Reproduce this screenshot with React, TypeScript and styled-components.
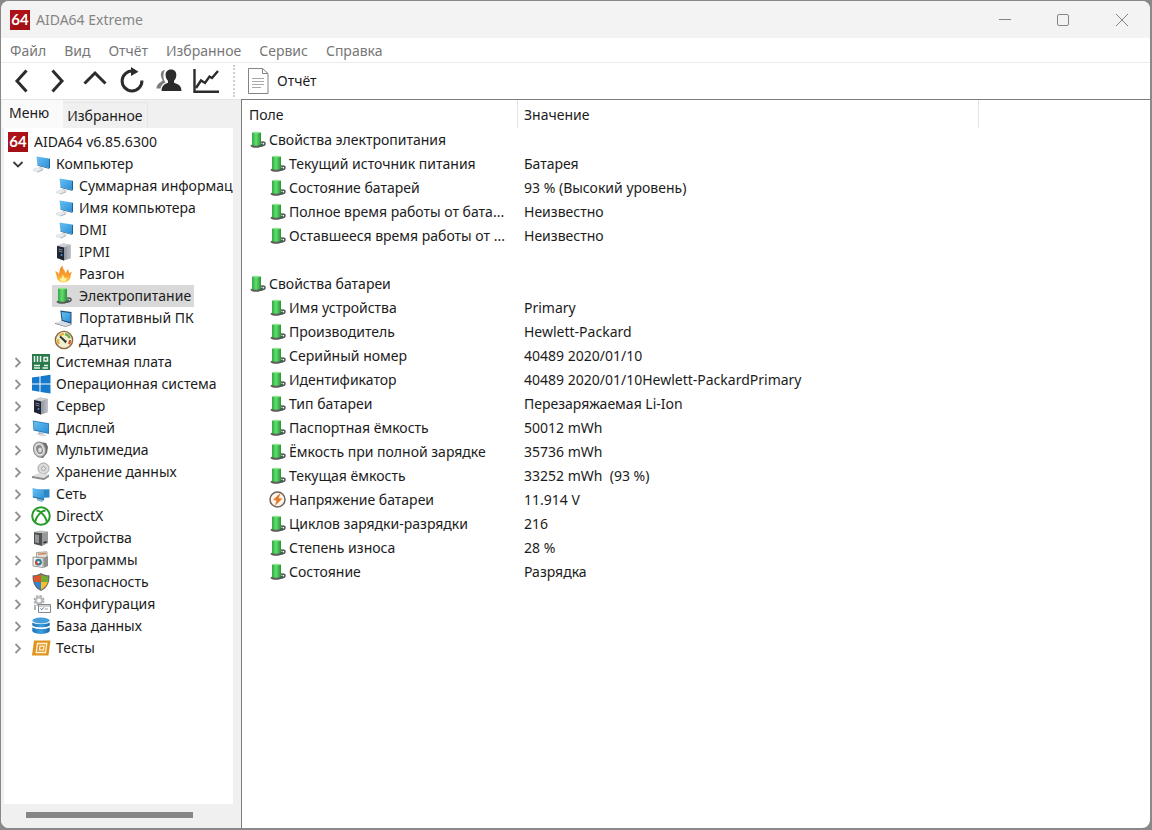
import React, { ReactNode, useState } from "react";
import styled, { createGlobalStyle } from "styled-components";

const GlobalStyle = createGlobalStyle`
  * { box-sizing: border-box; }
  body {
    margin: 0;
    background: #8b888a;
    color: #1c1c1c;
    font-family: "Noto Sans", "Open Sans", sans-serif;
    font-size: 14px;
    line-height: 22px;
  }
  button {
    margin: 0;
    padding: 0;
    border: 0;
    background: none;
    color: inherit;
    font: inherit;
    text-align: left;
  }
  svg { display: block; flex: none; overflow: visible; }
`;

const Desktop = styled.div`
  display: flex;
  min-height: 100vh;
  padding: 1px 2px 2px 1px;
`;

const AppWindow = styled.main`
  flex: 1;
  min-width: 0;
  display: flex;
  flex-direction: column;
  overflow: hidden;
  border-radius: 8px;
  background: #fff;
`;

const TitleBar = styled.header`
  display: flex;
  align-items: center;
  height: 37px;
  padding-left: 9px;
  background: #f3f3f3;
  color: #858585;
`;

const Title = styled.h1`
  flex: 1;
  margin: 0 0 0 6px;
  font-size: 14px;
  font-weight: 400;
`;

const CaptionButton = styled.button`
  display: flex;
  align-items: center;
  justify-content: center;
  width: 58px;
  height: 36px;
`;

const MenuBar = styled.nav`
  display: flex;
  align-items: flex-end;
  height: 25px;
  border-bottom: 1px solid #ebebeb;
  color: #777;
`;

const MenuItem = styled.button`
  padding: 0 9px;
`;

const Toolbar = styled.div`
  display: flex;
  align-items: center;
  height: 36px;
  padding-left: 1px;
`;

const ToolButton = styled.button`
  display: flex;
  align-items: center;
  justify-content: center;
  width: 37px;
  height: 34px;
`;

const ToolSeparator = styled.span`
  height: 32px;
  margin: 0 13px 0 9px;
  border-left: 2px dotted #cfcfcf;
`;

const ReportButton = styled.button`
  display: flex;
  align-items: center;
  gap: 8px;
`;

const Body = styled.div`
  flex: 1;
  display: flex;
  min-height: 0;
`;

const Sidebar = styled.aside`
  display: flex;
  flex-direction: column;
  flex: none;
  width: 240px;
  padding: 0 8px 2px 3px;
  background: #f0f0f0;
  border-top: 1px solid #e4e4e4;
`;

const Tabs = styled.div`
  display: flex;
  align-items: flex-end;
  height: 28px;
  margin-left: -2px;
`;

const Tab = styled.button<{ $active: boolean }>`
  height: ${(p) => (p.$active ? 28 : 26)}px;
  padding: ${(p) => (p.$active ? "0 14px 3px 7px" : "0 4px")};
  background: ${(p) => (p.$active ? "#fafafa" : "#f0f0f0")};
  border: ${(p) => (p.$active ? "0" : "1px solid #e6e6e6")};
  border-width: ${(p) => (p.$active ? "0" : "1px 1px 0 0")};
`;

const TreePane = styled.div`
  flex: 1;
  overflow: hidden;
  padding-top: 3px;
  background: #fff;
`;

const TreeList = styled.ul`
  margin: 0;
  padding: 0;
  list-style: none;
`;

const TreeRow = styled.li<{ $level: number }>`
  display: flex;
  align-items: center;
  height: 22px;
  padding-left: ${(p) => [1, 8, 48][p.$level]}px;
  white-space: nowrap;
`;

const Expander = styled.button`
  display: flex;
  align-items: center;
  justify-content: center;
  width: 12px;
  height: 22px;
  margin-right: 5px;
`;

const TreeLabel = styled.button<{ $selected?: boolean }>`
  display: flex;
  align-items: center;
  gap: 6px;
  height: 22px;
  padding: 0 3px;
  background: ${(p) => (p.$selected ? "#d9d9d9" : "transparent")};
`;

const ScrollTrack = styled.div`
  flex: none;
  height: 22px;
  padding: 8px 40px 8px 22px;
`;

const ScrollThumb = styled.div`
  height: 6px;
  background: #868686;
`;

const Details = styled.section`
  flex: 1;
  min-width: 0;
  border-top: 1px solid #7c7c7c;
  border-left: 1px solid #7c7c7c;
`;

const DetailsTable = styled.table`
  width: 100%;
  table-layout: fixed;
  border-collapse: separate;
  border-spacing: 0;
`;

const Column = styled.col<{ $width?: number }>`
  width: ${(p) => (p.$width ? `${p.$width}px` : "auto")};
`;

const HeadCell = styled.th`
  height: 28px;
  padding: 2px 6px 0 7px;
  border-right: 1px solid #e3e3e3;
  font-weight: 400;
  text-align: left;
  &:nth-child(2) { padding-left: 6px; }
  &:last-child { border-right: 0; }
`;

const Cell = styled.td`
  height: 24px;
  padding: 0 6px;
  white-space: pre;
  &:first-child { padding: 0 0 0 8px; }
`;

const FieldName = styled.div<{ $child: boolean }>`
  display: flex;
  align-items: center;
  gap: 3px;
  padding-left: ${(p) => (p.$child ? 20 : 0)}px;
`;

/* ---------- icons ---------- */

const SharedGradients = () => (
  <svg width="0" height="0" aria-hidden="true">
    <defs>
      <linearGradient id="green"><stop offset="0" stopColor="#2fa848" /><stop offset=".45" stopColor="#63dd6b" /><stop offset="1" stopColor="#27923b" /></linearGradient>
      <linearGradient id="screen" x2="1" y2="1"><stop offset="0" stopColor="#69c0f2" /><stop offset="1" stopColor="#2a8fd6" /></linearGradient>
      <linearGradient id="steel"><stop offset="0" stopColor="#8d9098" /><stop offset="1" stopColor="#c2c4ca" /></linearGradient>
      <linearGradient id="fire" x2="0" y2="1"><stop offset="0" stopColor="#f0862b" /><stop offset=".6" stopColor="#f9a12e" /><stop offset="1" stopColor="#fdd04c" /></linearGradient>
      <linearGradient id="blue" x2="1"><stop offset="0" stopColor="#1a73b8" /><stop offset=".5" stopColor="#3f9fe0" /><stop offset="1" stopColor="#1766a8" /></linearGradient>
    </defs>
  </svg>
);

const Icon = ({ size = 18, box = 18, children }: { size?: number; box?: number; children: ReactNode }) => (
  <svg width={size} height={size} viewBox={`0 0 ${box} ${box}`} fill="none" aria-hidden="true">{children}</svg>
);

const LogoText = styled.text`
  fill: #fff;
  font-family: Lato, sans-serif;
  font-size: 15px;
  font-weight: 700;
  text-anchor: middle;
`;

const Logo = () => (
  <Icon size={20} box={20}>
    <path fill="#ae1218" d="M0 0h20v20H0z" />
    <path fill="#8c0b12" d="M20 0v20H0z" opacity=".35" />
    <LogoText x="10" y="15">64</LogoText>
  </Icon>
);

const ComputerIcon = () => (
  <Icon>
    <path fill="#c9d3da" d="M2 13.500l7-1.500 3 2-6 3-5-1z" />
    <path fill="#e6eaed" d="M0 14.500l6-2 4 1.500-5 3z" />
    <path fill="#9aa8b3" d="M5 17l6-2.600v.8L5.500 17.500z" />
    <path fill="url(#screen)" d="M4.500 1.500L17 3.600v9.400L5.500 10z" />
    <path fill="#1f6396" d="M17 3.600l1 .3v9.200l-1.200.7L5.500 10.800V10L17 13z" />
  </Icon>
);

const LaptopIcon = () => (
  <Icon>
    <path fill="#234e78" d="M5.300 1.500L16.500 3v12L6.600 12z" />
    <path fill="url(#screen)" d="M6.400 2.900l9.100 1.200v9.200L7.600 11z" />
    <path fill="#d5dbe0" d="M0 14l6.500-2 10 3-6 2.400z" />
    <path fill="#5d6c78" d="M0 14l10.500 3.400 6-2.400v.8l-6 2.200L0 14.800z" />
  </Icon>
);

const ServerIcon = () => (
  <Icon>
    <path fill="#8e9199" d="M2 3l6.500-2.500L16 2v13l-7.500 2.500L2 15z" />
    <path fill="#cdcfd5" d="M2 3l6.500-2.500L16 2 9 4.500z" />
    <path fill="url(#steel)" d="M9 4.500L16 2v13l-7.500 2.500z" />
    <path fill="#20242e" d="M2 3l7 1.500v13L2 15z" />
    <path stroke="#738ba8" d="M3.500 6l4 1M3.500 8l4 1" />
    <circle cx="6.500" cy="12" r="1" fill="#3f95e5" />
  </Icon>
);

const FlameIcon = () => (
  <Icon>
    <path fill="url(#fire)" d="M8 17.500C3.800 17.300 2 14.500 1.800 12 1.600 9.300.5 7.800.3 6.300c2 .5 3.200 1.500 3.700 3C4.600 7 4.300 3 7.500.500 7.600 4.500 10 5 10.700 8.300c1-1.200 1-3 2.500-4.500 0 2 .8 3 1 4.300.8-.6 2-1 3-.8-1.800 1.700-1.200 4-2 6-.9 2.300-3.300 4.400-7.200 4.200z" />
    <path fill="#fff09a" d="M8.500 16.800c-2.700 0-4-2-3.500-4l1.300 1.200c.2-2 1-3 1.800-4.500.3 2 1.400 2.300 1.700 4.300l1.700-1.500c.6 2.400-.6 4.500-3 4.500z" />
  </Icon>
);

const PowerIcon = () => (
  <Icon size={16} box={16}>
    <ellipse cx="6" cy="13.800" rx="5.500" ry="2" fill="#5b605b" />
    <path stroke="#4e5a55" strokeWidth="1.600" d="M8 14.200c3.400.4 6.600-.7 7-2.200s-1.500-2.400-4.500-1.800M8 13l5-1" />
    <path fill="url(#green)" d="M2 .5h9v11.800c-1.500 1.700-6.500 2-9 .7z" />
    <ellipse cx="6.500" cy=".6" rx="4.500" ry=".8" fill="#8ee58f" />
  </Icon>
);

const GaugeIcon = () => (
  <Icon>
    <circle cx="9" cy="9" r="8.600" fill="#f1efd2" stroke="#8c6439" strokeWidth="1.400" />
    <path stroke="#e8af38" strokeWidth="2.200" d="M4 13a6 6 0 0 1-.8-5M4.500 5A6 6 0 0 1 9 3" />
    <path stroke="#69ad49" strokeWidth="2.200" d="M10 3.100a6 6 0 0 1 4.700 4" />
    <path stroke="#d65a2c" strokeWidth="2.200" d="M15 9a6 6 0 0 1-1.200 4" />
    <path stroke="#2e3a2c" strokeWidth="2" d="M5 5.500l5 4.500" />
    <path fill="#2c302c" d="M8 9l4 .8-1.500 2.700z" />
  </Icon>
);

const BoardIcon = () => (
  <Icon>
    <path fill="#28784b" d="M0 1h18v16H0z" />
    <path stroke="#e6f2ea" strokeWidth="1.500" d="M2.500 3v6M5.500 3v6M8.500 3v6M2 12.500h6M2 15h6M12 12.500h4M10.500 15h5.500" />
    <path stroke="#e6f2ea" strokeWidth="1.500" d="M12 4.500h3.500V8H12z" />
  </Icon>
);

const WindowsIcon = () => (
  <Icon>
    <path fill="#1679c9" d="M0 2.500l7.500-1.100v7.200H0zM8.500 1.200L18.500-.3v8.900h-10zM0 9.500h7.500v7.200L0 15.600zM8.500 9.500h10v8.900l-10-1.500z" />
  </Icon>
);

const DisplayIcon = () => (
  <Icon>
    <path fill="#9cabb5" d="M7 13l5 1.500v2L6 15z" />
    <path fill="#d4dce1" d="M4 15l7-.5 4 2-5 1z" />
    <path fill="#2d80b9" d="M.800 1.500L17 4.300V15L1.500 11.500z" />
    <path fill="url(#screen)" d="M1.600 2.500L16 5.100v8.600L2.300 10.600z" />
  </Icon>
);

const SpeakerIcon = () => (
  <Icon>
    <path fill="#6a6a6a" d="M8 1l6 1 2 4-1 6-4 5-5-1z" />
    <ellipse cx="7.500" cy="8.500" rx="6" ry="7.600" fill="#c9c9c9" stroke="#8d8d8d" transform="rotate(-15 7.500 8.500)" />
    <ellipse cx="7.500" cy="8.500" rx="3.800" ry="5.200" fill="#8b8b8b" stroke="#e9e9e9" transform="rotate(-15 7.500 8.500)" />
    <ellipse cx="8" cy="9" rx="1.800" ry="2.600" fill="#e0e0e0" />
  </Icon>
);

const DriveIcon = () => (
  <Icon>
    <circle cx="11.500" cy="5.500" r="5.500" fill="#dadada" stroke="#a5a5a5" />
    <circle cx="11.500" cy="5.500" r="1.800" fill="#f7f7f7" stroke="#999" />
    <path fill="#dedede" d="M0 13l7-3 10 1.500-5 3.500z" />
    <path fill="#8b8b8b" d="M0 13l12 2 5-3.500v2.500l-5 3L0 15z" />
  </Icon>
);

const NetworkIcon = () => (
  <Icon>
    <path fill="#8cb7ce" d="M5 13l8 1.500-3 2.500-5-1.500z" />
    <path fill="#2c87c4" d="M5 4.500l12.500-.3v8.300L7 13z" />
    <path fill="url(#screen)" d="M.5 3L12 5.500v9L.8 12z" />
    <path fill="#1f689e" d="M.800 11.500L12 14v1L.800 12.500z" />
  </Icon>
);

const XIcon = () => (
  <Icon>
    <circle cx="9" cy="9" r="8.800" stroke="#279b2b" strokeWidth="2" />
    <path stroke="#279b2b" strokeWidth="2" d="M3 15C4 11.500 7 7 9 5.500M15 15c-1-3.500-4-8-6-9.500M4.500 3.500C7 3.500 8 4.600 9 5.500c1-.9 2-2 4.500-2" />
  </Icon>
);

const DeviceIcon = () => (
  <Icon>
    <path fill="#4f5052" d="M2 3l8 1v13l-8-2z" />
    <path fill="#b9babb" d="M2 3l6-1.500 8 1L10 4z" />
    <path fill="#97999b" d="M10 4l6-1.500V14l-6 3z" />
    <path stroke="#d9dadb" d="M4 5.500v8M6 6v8" />
    <path fill="#222" d="M11.500 13l3-1v1.500l-3 1z" />
  </Icon>
);

const ProgramsIcon = () => (
  <Icon>
    <path fill="#e4e1dc" stroke="#aaa49b" d="M4.500 1.500L15 .8v6L4.500 6z" />
    <path fill="#d08455" d="M6 2.500l8-.7v1.500L6 4z" />
    <path fill="#f3f3f3" stroke="#9a9a9a" d="M1 6l10 1v9.500L1 15z" />
    <path fill="#8f8f8f" d="M11.500 7L16 5v10l-4.500 2z" />
    <circle cx="6.500" cy="11.200" r="3.400" fill="#3d7f98" />
    <path fill="#d04a35" d="M6.500 11.200L3.300 10a3.400 3.400 0 0 0 2 4.500z" />
    <circle cx="6.500" cy="11.200" r="1.100" fill="#fff" />
  </Icon>
);

const ShieldIcon = () => (
  <Icon>
    <path fill="#67686a" d="M9 0c2.500 1.600 5.300 2.300 8.400 2.300.4 7.400-2.200 13-8.400 15.700C2.800 15.300.2 9.700.6 2.300 3.700 2.300 6.500 1.600 9 0z" />
    <path fill="#e0542a" d="M9 1.400V9H2.200c-.5-1.800-.6-3.500-.5-5.600 2.800-.2 5-.7 7.300-2z" />
    <path fill="#70ad34" d="M9 1.400c2.300 1.300 4.500 1.800 7.300 2 .1 2.100 0 3.800-.5 5.600H9z" />
    <path fill="#2e87d3" d="M9 9v7.800C5.600 15.100 3.300 12.600 2.200 9z" />
    <path fill="#fbbe2b" d="M9 9h6.800c-1.100 3.600-3.400 6.100-6.800 7.800z" />
  </Icon>
);

const ConfigIcon = () => (
  <Icon>
    <circle cx="7" cy="5.500" r="4.200" stroke="#a9adb0" strokeWidth="2.600" strokeDasharray="2.100 1.200" />
    <circle cx="7" cy="5.500" r="3" stroke="#b7babd" strokeWidth="2" />
    <path fill="#b3b6b9" d="M2 10h2v5H2z" />
    <path fill="#fff" stroke="#85898d" d="M6.500 9.500h12v8h-12z" />
    <path stroke="#3c7bc0" d="M8.500 13.500l1.200 1.200 2.300-2.400" />
    <path stroke="#9a9ea2" d="M13 14h3M7 11h11" />
  </Icon>
);

const DatabaseIcon = () => (
  <Icon>
    <ellipse cx="9" cy="3.500" rx="8.700" ry="2.900" fill="#459edc" />
    <path fill="url(#blue)" d="M.3 5.400c3 2.200 14.400 2.200 17.400 0v3.200c-2.600 2.600-14.800 2.600-17.400 0zM.3 10.300c3 2.200 14.400 2.200 17.400 0v4c-2.600 3.600-14.800 3.600-17.400 0z" />
    <path stroke="#fff" d="M.3 9.600c3 2.300 14.400 2.300 17.400 0" />
  </Icon>
);

const TestsIcon = () => (
  <Icon>
    <path fill="#e0941f" d="M2 1.500h16.500l-2 15H0z" />
    <path stroke="#fff2d6" strokeWidth="1.300" d="M5.500 4.500h9.300l-1.300 9H4.200z" />
    <path stroke="#fff2d6" strokeWidth="1.300" d="M8 7.200h4l-.5 3.600h-4z" />
  </Icon>
);

const VoltageIcon = () => (
  <Icon size={16} box={16}>
    <circle cx="7.500" cy="7.500" r="7.500" fill="#fdf7f0" stroke="#6d625c" strokeWidth="1.500" />
    <path fill="#e27a27" d="M10.500.8L3 8.100l3.600.3-2 5.900 7.900-7.700-3.700-.3z" />
  </Icon>
);

const toolIcons: { label: string; icon: ReactNode }[] = [
  { label: "Назад", icon: <path d="M19.500 3.500L10 14l9.500 10.500" /> },
  { label: "Вперёд", icon: <path d="M8.500 3.500L18 14 8.500 24.500" /> },
  { label: "Вверх", icon: <path d="M3.500 16.500L14 6l10.500 10.500" /> },
  {
    label: "Обновить",
    icon: (
      <>
        <path d="M15.500 4.200A9.900 9.900 0 1 0 23.900 13.500" />
        <path fill="#2c2c2c" stroke="none" d="M13 0l7.500 4.800L13 9z" />
      </>
    ),
  },
  {
    label: "Пользователи",
    icon: (
      <g stroke="none">
        <path fill="#7d7d7d" d="M10 3C6.500 3.500 5.500 6 6 9c.3 2 1 3 1.600 4.200C7 15 1.500 16 1.500 21.500h4c.5-3.500 3-5 5-6-1-1.500-2.500-4-2-7.500C8.700 6 9 4 10 3z" />
        <path fill="#2c2c2c" d="M16 2.500c3.600 0 5.600 2.400 5.300 6-.2 2.500-1 4-2.300 5.200v2c3 1.300 7.500 2 7.500 8.300h-20c0-6 3.500-7 6.500-8.300v-2c-1.300-1.200-2.200-2.700-2.400-5.200-.3-3.600 1.800-6 5.400-6z" />
      </g>
    ),
  },
  {
    label: "График",
    icon: (
      <g strokeWidth="2.400">
        <path d="M2.500 2v22.800H27" />
        <path d="M4 21l5-7.500 4 2.500 4.500-6.500 2.500 1.500L26 4" />
      </g>
    ),
  },
];

const ReportIcon = () => (
  <svg width="21" height="26" viewBox="0 0 21 26" fill="none" aria-hidden="true">
    <path fill="#fff" stroke="#838383" d="M.5.5h14l5.500 5v20H.5z" />
    <path stroke="#838383" d="M14.500.5v5H20" />
    <path stroke="#a9a9a9" d="M4 10.500h12M4 13.500h12M4 16.500h12M4 19.500h9" />
  </svg>
);

/* ---------- data ---------- */

const menuItems = ["Файл", "Вид", "Отчёт", "Избранное", "Сервис", "Справка"];

const computerPages: [string, ReactNode][] = [
  ["Суммарная информация", <ComputerIcon />],
  ["Имя компьютера", <ComputerIcon />],
  ["DMI", <ComputerIcon />],
  ["IPMI", <ServerIcon />],
  ["Разгон", <FlameIcon />],
  ["Электропитание", <Icon><g transform="translate(1 1)"><PowerIcon /></g></Icon>],
  ["Портативный ПК", <LaptopIcon />],
  ["Датчики", <GaugeIcon />],
];

const sections: [string, ReactNode][] = [
  ["Системная плата", <BoardIcon />],
  ["Операционная система", <WindowsIcon />],
  ["Сервер", <ServerIcon />],
  ["Дисплей", <DisplayIcon />],
  ["Мультимедиа", <SpeakerIcon />],
  ["Хранение данных", <DriveIcon />],
  ["Сеть", <NetworkIcon />],
  ["DirectX", <XIcon />],
  ["Устройства", <DeviceIcon />],
  ["Программы", <ProgramsIcon />],
  ["Безопасность", <ShieldIcon />],
  ["Конфигурация", <ConfigIcon />],
  ["База данных", <DatabaseIcon />],
  ["Тесты", <TestsIcon />],
];

type Detail = { name: string; value?: string; group?: boolean; voltage?: boolean };

const details: Detail[] = [
  { name: "Свойства электропитания", group: true },
  { name: "Текущий источник питания", value: "Батарея" },
  { name: "Состояние батарей", value: "93 % (Высокий уровень)" },
  { name: "Полное время работы от бата...", value: "Неизвестно" },
  { name: "Оставшееся время работы от ...", value: "Неизвестно" },
  { name: "" },
  { name: "Свойства батареи", group: true },
  { name: "Имя устройства", value: "Primary" },
  { name: "Производитель", value: "Hewlett-Packard" },
  { name: "Серийный номер", value: "40489 2020/01/10" },
  { name: "Идентификатор", value: "40489 2020/01/10Hewlett-PackardPrimary" },
  { name: "Тип батареи", value: "Перезаряжаемая Li-Ion" },
  { name: "Паспортная ёмкость", value: "50012 mWh" },
  { name: "Ёмкость при полной зарядке", value: "35736 mWh" },
  { name: "Текущая ёмкость", value: "33252 mWh  (93 %)" },
  { name: "Напряжение батареи", value: "11.914 V", voltage: true },
  { name: "Циклов зарядки-разрядки", value: "216" },
  { name: "Степень износа", value: "28 %" },
  { name: "Состояние", value: "Разрядка" },
];

const Chevron = ({ open }: { open: boolean }) => (
  <Icon size={12} box={12}>
    {open ? <path stroke="#3a3a3a" strokeWidth="1.800" d="M1.500 4l4.500 4.500L10.500 4" /> : <path stroke="#929292" strokeWidth="1.800" d="M3.500 2L8 6.500 3.500 11" />}
  </Icon>
);

export default function App() {
  const [page, setPage] = useState("Электропитание");
  const [open, setOpen] = useState(true);
  const [tab, setTab] = useState("Меню");

  return (
    <Desktop>
      <GlobalStyle />
      <AppWindow>
        <TitleBar>
          <Logo />
          <Title>AIDA64 Extreme</Title>
          <CaptionButton aria-label="Свернуть"><Icon><path stroke="#858585" d="M3 8.500h12" /></Icon></CaptionButton>
          <CaptionButton aria-label="Развернуть"><Icon><rect x="3.500" y="3.500" width="11" height="11" rx="1.500" stroke="#858585" /></Icon></CaptionButton>
          <CaptionButton aria-label="Закрыть"><Icon><path stroke="#858585" d="M4 3l12 12M16 3L4 15" /></Icon></CaptionButton>
        </TitleBar>
        <MenuBar>
          {menuItems.map((item) => <MenuItem key={item}>{item}</MenuItem>)}
        </MenuBar>
        <Toolbar>
          {toolIcons.map(({ label, icon }) => (
            <ToolButton key={label} aria-label={label}>
              <Icon size={28} box={28}><g stroke="#2c2c2c" strokeWidth="3">{icon}</g></Icon>
            </ToolButton>
          ))}
          <ToolSeparator />
          <ReportButton><ReportIcon />Отчёт</ReportButton>
        </Toolbar>
        <Body>
          <Sidebar>
            <Tabs role="tablist">
              {["Меню", "Избранное"].map((name) => (
                <Tab key={name} role="tab" aria-selected={tab === name} $active={tab === name} onClick={() => setTab(name)}>{name}</Tab>
              ))}
            </Tabs>
            <TreePane>
              <TreeList>
                <TreeRow $level={0}><TreeLabel><Logo />AIDA64 v6.85.6300</TreeLabel></TreeRow>
                <TreeRow $level={1}>
                  <Expander aria-label="Компьютер: разделы" aria-expanded={open} onClick={() => setOpen(!open)}><Chevron open={open} /></Expander>
                  <TreeLabel><ComputerIcon />Компьютер</TreeLabel>
                </TreeRow>
                {open && computerPages.map(([name, icon]) => (
                  <TreeRow key={name} $level={2}>
                    <TreeLabel $selected={page === name} onClick={() => setPage(name)}>{icon}{name}</TreeLabel>
                  </TreeRow>
                ))}
                {sections.map(([name, icon]) => (
                  <TreeRow key={name} $level={1}>
                    <Expander aria-label={`${name}: разделы`} aria-expanded={false}><Chevron open={false} /></Expander>
                    <TreeLabel>{icon}{name}</TreeLabel>
                  </TreeRow>
                ))}
              </TreeList>
            </TreePane>
            <ScrollTrack><ScrollThumb /></ScrollTrack>
          </Sidebar>
          <Details>
            <DetailsTable>
              <colgroup><Column $width={276} /><Column $width={461} /><Column /></colgroup>
              <thead>
                <tr><HeadCell scope="col">Поле</HeadCell><HeadCell scope="col">Значение</HeadCell><HeadCell /></tr>
              </thead>
              <tbody>
                {details.map((row, i) => (
                  <tr key={i}>
                    <Cell>
                      {row.name && (
                        <FieldName $child={!row.group}>
                          {row.voltage ? <VoltageIcon /> : <PowerIcon />}
                          <span>{row.name}</span>
                        </FieldName>
                      )}
                    </Cell>
                    <Cell>{row.value}</Cell>
                    <Cell />
                  </tr>
                ))}
              </tbody>
            </DetailsTable>
          </Details>
        </Body>
        <SharedGradients />
      </AppWindow>
    </Desktop>
  );
}
